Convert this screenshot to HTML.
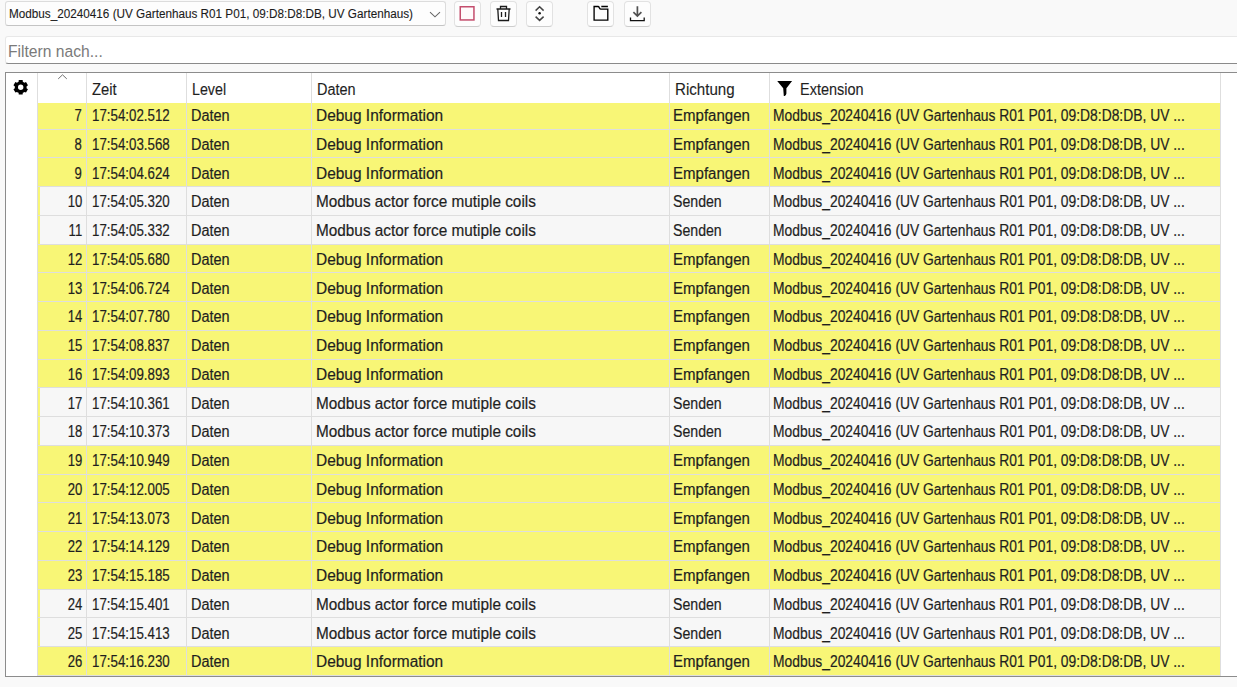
<!DOCTYPE html><html><head><meta charset="utf-8"><title>Log</title><style>
*{box-sizing:border-box;margin:0;padding:0}
html,body{width:1237px;height:687px;overflow:hidden;background:#f9f9f9;font-family:"Liberation Sans",sans-serif;}
.abs{position:absolute}
.t{position:absolute;white-space:nowrap;transform-origin:0 0;line-height:1}
.combo{left:5px;top:1px;width:441px;height:25px;background:#fdfdfd;border:1px solid #dcdcdc;border-bottom-color:#c4c4c4;border-radius:3px}
.btn{top:1px;width:27px;height:26px;background:#fdfdfd;border:1px solid #e2e2e2;border-bottom-color:#cdcdcd;border-radius:4px}
.filter{left:5px;top:36px;width:1240px;height:28px;background:#fff;border:1px solid #e8e8e8;border-bottom:1px solid #8a8a8a;border-radius:3px}
.grid{left:5px;top:72px;width:1240px;height:605px;background:#fff;border:1px solid #8c8c8c;overflow:hidden}
.row{position:absolute;left:32px;width:1183px;height:28.75px}
.y{background:#f8f676}
.g{background:#f7f7f7}
.sep{position:absolute;left:32px;width:1183px;height:1px;background:#dedede}
.vl{position:absolute;top:0;width:1px;height:605px;background:#dedede}
.cell{position:absolute;white-space:nowrap;font-size:15px;color:#1f1f1f;line-height:1;transform-origin:0 0;-webkit-text-stroke:0.2px #1f1f1f}
</style></head><body>
<div class="abs combo"></div>
<div class="t" style="left:9.02px;top:8.44px;font-size:12px;color:#1b1b1b;transform:scaleX(0.9769);-webkit-text-stroke:0.1px #1b1b1b">Modbus_20240416 (UV Gartenhaus R01 P01, 09:D8:D8:DB, UV Gartenhaus)</div>
<svg class="abs" style="left:428px;top:9px" width="14" height="10" viewBox="0 0 14 10"><path d="M2 3.2 L7 7.8 L12 3.2" fill="none" stroke="#666" stroke-width="1.05"/></svg>
<div class="abs btn" style="left:454px"></div>
<div class="abs btn" style="left:490px"></div>
<div class="abs btn" style="left:526px"></div>
<div class="abs btn" style="left:587px"></div>
<div class="abs btn" style="left:624px"></div>
<svg class="abs" style="left:454px;top:1px" width="27" height="26" viewBox="0 0 27 26"><rect x="6.25" y="5.75" width="13.7" height="13.2" fill="#fffafb" stroke="#c44d6d" stroke-width="1.5"/></svg>
<svg class="abs" style="left:490px;top:1px" width="27" height="26" viewBox="0 0 27 26"><path d="M6.5 8 H20.5 M10.5 7.5 V5.5 H16.5 V7.5 M7.8 8 L8.5 19.5 H18.5 L19.2 8 M11.5 11.1 V16 M15.5 11.1 V16" fill="none" stroke="#1a1a1a" stroke-width="1.3"/></svg>
<svg class="abs" style="left:526px;top:1px" width="27" height="26" viewBox="0 0 27 26"><path d="M9.6 9.6 L13.6 5.8 L17.6 9.6 M9.6 15.6 L13.6 19.4 L17.6 15.6" fill="none" stroke="#444" stroke-width="1.5"/><circle cx="13.6" cy="12.3" r="1.25" fill="#111"/></svg>
<svg class="abs" style="left:587px;top:1px" width="27" height="26" viewBox="0 0 27 26"><path d="M7.1 5.5 H11 Q11.8 5.5 12.3 6.6 L12.7 7.4 Q13 8.05 13.8 8.05 H20.8 V19.1 H7.1 Z M14.3 5.45 H20.9" fill="none" stroke="#000" stroke-width="1.35"/></svg>
<svg class="abs" style="left:624px;top:1px" width="27" height="26" viewBox="0 0 27 26"><path d="M13.4 5.2 V14.8 M9.4 11.2 L13.4 15 L17.4 11.2" fill="none" stroke="#505050" stroke-width="1.7"/><path d="M6.5 16.5 V19.7 H20.2 V16.5" fill="none" stroke="#111" stroke-width="1.3"/></svg>
<div class="abs filter"></div>
<div class="t" style="left:8.24px;top:43.10px;font-size:16.3px;color:#7a7a7a;transform:scaleX(0.9604);-webkit-text-stroke:0px #7a7a7a">Filtern nach...</div>
<div class="abs grid">
<div class="row y" style="top:30px;height:26.0px"></div>
<div class="row y" style="top:56.0px;height:28.75px"></div>
<div class="row y" style="top:84.75px;height:28.75px"></div>
<div class="row g" style="top:113.5px;height:28.75px"></div>
<div class="row y" style="top:113.5px;height:28.75px;width:2px"></div>
<div class="row g" style="top:142.25px;height:28.75px"></div>
<div class="row y" style="top:142.25px;height:28.75px;width:2px"></div>
<div class="row y" style="top:171.0px;height:28.75px"></div>
<div class="row y" style="top:199.75px;height:28.75px"></div>
<div class="row y" style="top:228.5px;height:28.75px"></div>
<div class="row y" style="top:257.25px;height:28.75px"></div>
<div class="row y" style="top:286.0px;height:28.75px"></div>
<div class="row g" style="top:314.75px;height:28.75px"></div>
<div class="row y" style="top:314.75px;height:28.75px;width:2px"></div>
<div class="row g" style="top:343.5px;height:28.75px"></div>
<div class="row y" style="top:343.5px;height:28.75px;width:2px"></div>
<div class="row y" style="top:372.25px;height:28.75px"></div>
<div class="row y" style="top:401.0px;height:28.75px"></div>
<div class="row y" style="top:429.75px;height:28.75px"></div>
<div class="row y" style="top:458.5px;height:28.75px"></div>
<div class="row y" style="top:487.25px;height:28.75px"></div>
<div class="row g" style="top:516.0px;height:28.75px"></div>
<div class="row y" style="top:516.0px;height:28.75px;width:2px"></div>
<div class="row g" style="top:544.75px;height:28.75px"></div>
<div class="row y" style="top:544.75px;height:28.75px;width:2px"></div>
<div class="row y" style="top:573.5px;height:28.75px"></div>
<div class="sep" style="top:55.5px"></div>
<div class="sep" style="top:84.25px"></div>
<div class="sep" style="top:113.0px"></div>
<div class="sep" style="top:141.75px"></div>
<div class="sep" style="top:170.5px"></div>
<div class="sep" style="top:199.25px"></div>
<div class="sep" style="top:228.0px"></div>
<div class="sep" style="top:256.75px"></div>
<div class="sep" style="top:285.5px"></div>
<div class="sep" style="top:314.25px"></div>
<div class="sep" style="top:343.0px"></div>
<div class="sep" style="top:371.75px"></div>
<div class="sep" style="top:400.5px"></div>
<div class="sep" style="top:429.25px"></div>
<div class="sep" style="top:458.0px"></div>
<div class="sep" style="top:486.75px"></div>
<div class="sep" style="top:515.5px"></div>
<div class="sep" style="top:544.25px"></div>
<div class="sep" style="top:573.0px"></div>
<div class="sep" style="top:601.75px"></div>
<div class="vl" style="left:31px"></div>
<div class="vl" style="left:80px"></div>
<div class="vl" style="left:180px"></div>
<div class="vl" style="left:305px"></div>
<div class="vl" style="left:663px"></div>
<div class="vl" style="left:763px"></div>
<div class="vl" style="left:1214px"></div>
<div class="cell" style="left:86.20px;top:9.29px;font-size:15.6px;color:#1f1f1f;transform:scaleX(0.9462);-webkit-text-stroke:0.12px #1f1f1f">Zeit</div>
<div class="cell" style="left:186.09px;top:9.29px;font-size:15.6px;color:#1f1f1f;transform:scaleX(0.9143);-webkit-text-stroke:0.12px #1f1f1f">Level</div>
<div class="cell" style="left:311.27px;top:9.29px;font-size:15.6px;color:#1f1f1f;transform:scaleX(0.9275);-webkit-text-stroke:0.12px #1f1f1f">Daten</div>
<div class="cell" style="left:668.73px;top:9.29px;font-size:15.6px;color:#1f1f1f;transform:scaleX(0.9700);-webkit-text-stroke:0.12px #1f1f1f">Richtung</div>
<div class="cell" style="left:794.07px;top:9.29px;font-size:15.6px;color:#1f1f1f;transform:scaleX(0.9284);-webkit-text-stroke:0.12px #1f1f1f">Extension</div>
<div class="cell" style="right:1162px;top:35.24px;font-size:15.6px;transform:scaleX(0.84);transform-origin:100% 0">7</div>
<div class="cell" style="left:85.85px;top:35.24px;font-size:15.6px;color:#1f1f1f;transform:scaleX(0.8533)">17:54:02.512</div>
<div class="cell" style="left:184.77px;top:35.24px;font-size:15.6px;color:#1f1f1f;transform:scaleX(0.9275)">Daten</div>
<div class="cell" style="left:309.61px;top:35.24px;font-size:15.6px;color:#1f1f1f;transform:scaleX(0.9913)">Debug Information</div>
<div class="cell" style="left:667.24px;top:35.24px;font-size:15.6px;color:#1f1f1f;transform:scaleX(0.9641)">Empfangen</div>
<div class="cell" style="left:767.41px;top:35.24px;font-size:15.6px;color:#1f1f1f;transform:scaleX(0.8879)">Modbus_20240416 (UV Gartenhaus R01 P01, 09:D8:D8:DB, UV ...</div>
<div class="cell" style="right:1162px;top:63.99px;font-size:15.6px;transform:scaleX(0.84);transform-origin:100% 0">8</div>
<div class="cell" style="left:85.85px;top:63.99px;font-size:15.6px;color:#1f1f1f;transform:scaleX(0.8533)">17:54:03.568</div>
<div class="cell" style="left:184.77px;top:63.99px;font-size:15.6px;color:#1f1f1f;transform:scaleX(0.9275)">Daten</div>
<div class="cell" style="left:309.61px;top:63.99px;font-size:15.6px;color:#1f1f1f;transform:scaleX(0.9913)">Debug Information</div>
<div class="cell" style="left:667.24px;top:63.99px;font-size:15.6px;color:#1f1f1f;transform:scaleX(0.9641)">Empfangen</div>
<div class="cell" style="left:767.41px;top:63.99px;font-size:15.6px;color:#1f1f1f;transform:scaleX(0.8879)">Modbus_20240416 (UV Gartenhaus R01 P01, 09:D8:D8:DB, UV ...</div>
<div class="cell" style="right:1162px;top:92.74px;font-size:15.6px;transform:scaleX(0.84);transform-origin:100% 0">9</div>
<div class="cell" style="left:85.85px;top:92.74px;font-size:15.6px;color:#1f1f1f;transform:scaleX(0.8533)">17:54:04.624</div>
<div class="cell" style="left:184.77px;top:92.74px;font-size:15.6px;color:#1f1f1f;transform:scaleX(0.9275)">Daten</div>
<div class="cell" style="left:309.61px;top:92.74px;font-size:15.6px;color:#1f1f1f;transform:scaleX(0.9913)">Debug Information</div>
<div class="cell" style="left:667.24px;top:92.74px;font-size:15.6px;color:#1f1f1f;transform:scaleX(0.9641)">Empfangen</div>
<div class="cell" style="left:767.41px;top:92.74px;font-size:15.6px;color:#1f1f1f;transform:scaleX(0.8879)">Modbus_20240416 (UV Gartenhaus R01 P01, 09:D8:D8:DB, UV ...</div>
<div class="cell" style="right:1162px;top:121.49px;font-size:15.6px;transform:scaleX(0.84);transform-origin:100% 0">10</div>
<div class="cell" style="left:85.85px;top:121.49px;font-size:15.6px;color:#1f1f1f;transform:scaleX(0.8533)">17:54:05.320</div>
<div class="cell" style="left:184.77px;top:121.49px;font-size:15.6px;color:#1f1f1f;transform:scaleX(0.9275)">Daten</div>
<div class="cell" style="left:309.62px;top:121.49px;font-size:15.6px;color:#1f1f1f;transform:scaleX(0.9833)">Modbus actor force mutiple coils</div>
<div class="cell" style="left:667.29px;top:121.49px;font-size:15.6px;color:#1f1f1f;transform:scaleX(0.9058)">Senden</div>
<div class="cell" style="left:767.41px;top:121.49px;font-size:15.6px;color:#1f1f1f;transform:scaleX(0.8879)">Modbus_20240416 (UV Gartenhaus R01 P01, 09:D8:D8:DB, UV ...</div>
<div class="cell" style="right:1162px;top:150.24px;font-size:15.6px;transform:scaleX(0.84);transform-origin:100% 0">11</div>
<div class="cell" style="left:85.85px;top:150.24px;font-size:15.6px;color:#1f1f1f;transform:scaleX(0.8533)">17:54:05.332</div>
<div class="cell" style="left:184.77px;top:150.24px;font-size:15.6px;color:#1f1f1f;transform:scaleX(0.9275)">Daten</div>
<div class="cell" style="left:309.62px;top:150.24px;font-size:15.6px;color:#1f1f1f;transform:scaleX(0.9833)">Modbus actor force mutiple coils</div>
<div class="cell" style="left:667.29px;top:150.24px;font-size:15.6px;color:#1f1f1f;transform:scaleX(0.9058)">Senden</div>
<div class="cell" style="left:767.41px;top:150.24px;font-size:15.6px;color:#1f1f1f;transform:scaleX(0.8879)">Modbus_20240416 (UV Gartenhaus R01 P01, 09:D8:D8:DB, UV ...</div>
<div class="cell" style="right:1162px;top:178.99px;font-size:15.6px;transform:scaleX(0.84);transform-origin:100% 0">12</div>
<div class="cell" style="left:85.85px;top:178.99px;font-size:15.6px;color:#1f1f1f;transform:scaleX(0.8533)">17:54:05.680</div>
<div class="cell" style="left:184.77px;top:178.99px;font-size:15.6px;color:#1f1f1f;transform:scaleX(0.9275)">Daten</div>
<div class="cell" style="left:309.61px;top:178.99px;font-size:15.6px;color:#1f1f1f;transform:scaleX(0.9913)">Debug Information</div>
<div class="cell" style="left:667.24px;top:178.99px;font-size:15.6px;color:#1f1f1f;transform:scaleX(0.9641)">Empfangen</div>
<div class="cell" style="left:767.41px;top:178.99px;font-size:15.6px;color:#1f1f1f;transform:scaleX(0.8879)">Modbus_20240416 (UV Gartenhaus R01 P01, 09:D8:D8:DB, UV ...</div>
<div class="cell" style="right:1162px;top:207.74px;font-size:15.6px;transform:scaleX(0.84);transform-origin:100% 0">13</div>
<div class="cell" style="left:85.85px;top:207.74px;font-size:15.6px;color:#1f1f1f;transform:scaleX(0.8533)">17:54:06.724</div>
<div class="cell" style="left:184.77px;top:207.74px;font-size:15.6px;color:#1f1f1f;transform:scaleX(0.9275)">Daten</div>
<div class="cell" style="left:309.61px;top:207.74px;font-size:15.6px;color:#1f1f1f;transform:scaleX(0.9913)">Debug Information</div>
<div class="cell" style="left:667.24px;top:207.74px;font-size:15.6px;color:#1f1f1f;transform:scaleX(0.9641)">Empfangen</div>
<div class="cell" style="left:767.41px;top:207.74px;font-size:15.6px;color:#1f1f1f;transform:scaleX(0.8879)">Modbus_20240416 (UV Gartenhaus R01 P01, 09:D8:D8:DB, UV ...</div>
<div class="cell" style="right:1162px;top:236.49px;font-size:15.6px;transform:scaleX(0.84);transform-origin:100% 0">14</div>
<div class="cell" style="left:85.85px;top:236.49px;font-size:15.6px;color:#1f1f1f;transform:scaleX(0.8533)">17:54:07.780</div>
<div class="cell" style="left:184.77px;top:236.49px;font-size:15.6px;color:#1f1f1f;transform:scaleX(0.9275)">Daten</div>
<div class="cell" style="left:309.61px;top:236.49px;font-size:15.6px;color:#1f1f1f;transform:scaleX(0.9913)">Debug Information</div>
<div class="cell" style="left:667.24px;top:236.49px;font-size:15.6px;color:#1f1f1f;transform:scaleX(0.9641)">Empfangen</div>
<div class="cell" style="left:767.41px;top:236.49px;font-size:15.6px;color:#1f1f1f;transform:scaleX(0.8879)">Modbus_20240416 (UV Gartenhaus R01 P01, 09:D8:D8:DB, UV ...</div>
<div class="cell" style="right:1162px;top:265.24px;font-size:15.6px;transform:scaleX(0.84);transform-origin:100% 0">15</div>
<div class="cell" style="left:85.85px;top:265.24px;font-size:15.6px;color:#1f1f1f;transform:scaleX(0.8533)">17:54:08.837</div>
<div class="cell" style="left:184.77px;top:265.24px;font-size:15.6px;color:#1f1f1f;transform:scaleX(0.9275)">Daten</div>
<div class="cell" style="left:309.61px;top:265.24px;font-size:15.6px;color:#1f1f1f;transform:scaleX(0.9913)">Debug Information</div>
<div class="cell" style="left:667.24px;top:265.24px;font-size:15.6px;color:#1f1f1f;transform:scaleX(0.9641)">Empfangen</div>
<div class="cell" style="left:767.41px;top:265.24px;font-size:15.6px;color:#1f1f1f;transform:scaleX(0.8879)">Modbus_20240416 (UV Gartenhaus R01 P01, 09:D8:D8:DB, UV ...</div>
<div class="cell" style="right:1162px;top:293.99px;font-size:15.6px;transform:scaleX(0.84);transform-origin:100% 0">16</div>
<div class="cell" style="left:85.85px;top:293.99px;font-size:15.6px;color:#1f1f1f;transform:scaleX(0.8533)">17:54:09.893</div>
<div class="cell" style="left:184.77px;top:293.99px;font-size:15.6px;color:#1f1f1f;transform:scaleX(0.9275)">Daten</div>
<div class="cell" style="left:309.61px;top:293.99px;font-size:15.6px;color:#1f1f1f;transform:scaleX(0.9913)">Debug Information</div>
<div class="cell" style="left:667.24px;top:293.99px;font-size:15.6px;color:#1f1f1f;transform:scaleX(0.9641)">Empfangen</div>
<div class="cell" style="left:767.41px;top:293.99px;font-size:15.6px;color:#1f1f1f;transform:scaleX(0.8879)">Modbus_20240416 (UV Gartenhaus R01 P01, 09:D8:D8:DB, UV ...</div>
<div class="cell" style="right:1162px;top:322.74px;font-size:15.6px;transform:scaleX(0.84);transform-origin:100% 0">17</div>
<div class="cell" style="left:85.85px;top:322.74px;font-size:15.6px;color:#1f1f1f;transform:scaleX(0.8533)">17:54:10.361</div>
<div class="cell" style="left:184.77px;top:322.74px;font-size:15.6px;color:#1f1f1f;transform:scaleX(0.9275)">Daten</div>
<div class="cell" style="left:309.62px;top:322.74px;font-size:15.6px;color:#1f1f1f;transform:scaleX(0.9833)">Modbus actor force mutiple coils</div>
<div class="cell" style="left:667.29px;top:322.74px;font-size:15.6px;color:#1f1f1f;transform:scaleX(0.9058)">Senden</div>
<div class="cell" style="left:767.41px;top:322.74px;font-size:15.6px;color:#1f1f1f;transform:scaleX(0.8879)">Modbus_20240416 (UV Gartenhaus R01 P01, 09:D8:D8:DB, UV ...</div>
<div class="cell" style="right:1162px;top:351.49px;font-size:15.6px;transform:scaleX(0.84);transform-origin:100% 0">18</div>
<div class="cell" style="left:85.85px;top:351.49px;font-size:15.6px;color:#1f1f1f;transform:scaleX(0.8533)">17:54:10.373</div>
<div class="cell" style="left:184.77px;top:351.49px;font-size:15.6px;color:#1f1f1f;transform:scaleX(0.9275)">Daten</div>
<div class="cell" style="left:309.62px;top:351.49px;font-size:15.6px;color:#1f1f1f;transform:scaleX(0.9833)">Modbus actor force mutiple coils</div>
<div class="cell" style="left:667.29px;top:351.49px;font-size:15.6px;color:#1f1f1f;transform:scaleX(0.9058)">Senden</div>
<div class="cell" style="left:767.41px;top:351.49px;font-size:15.6px;color:#1f1f1f;transform:scaleX(0.8879)">Modbus_20240416 (UV Gartenhaus R01 P01, 09:D8:D8:DB, UV ...</div>
<div class="cell" style="right:1162px;top:380.24px;font-size:15.6px;transform:scaleX(0.84);transform-origin:100% 0">19</div>
<div class="cell" style="left:85.85px;top:380.24px;font-size:15.6px;color:#1f1f1f;transform:scaleX(0.8533)">17:54:10.949</div>
<div class="cell" style="left:184.77px;top:380.24px;font-size:15.6px;color:#1f1f1f;transform:scaleX(0.9275)">Daten</div>
<div class="cell" style="left:309.61px;top:380.24px;font-size:15.6px;color:#1f1f1f;transform:scaleX(0.9913)">Debug Information</div>
<div class="cell" style="left:667.24px;top:380.24px;font-size:15.6px;color:#1f1f1f;transform:scaleX(0.9641)">Empfangen</div>
<div class="cell" style="left:767.41px;top:380.24px;font-size:15.6px;color:#1f1f1f;transform:scaleX(0.8879)">Modbus_20240416 (UV Gartenhaus R01 P01, 09:D8:D8:DB, UV ...</div>
<div class="cell" style="right:1162px;top:408.99px;font-size:15.6px;transform:scaleX(0.84);transform-origin:100% 0">20</div>
<div class="cell" style="left:85.85px;top:408.99px;font-size:15.6px;color:#1f1f1f;transform:scaleX(0.8533)">17:54:12.005</div>
<div class="cell" style="left:184.77px;top:408.99px;font-size:15.6px;color:#1f1f1f;transform:scaleX(0.9275)">Daten</div>
<div class="cell" style="left:309.61px;top:408.99px;font-size:15.6px;color:#1f1f1f;transform:scaleX(0.9913)">Debug Information</div>
<div class="cell" style="left:667.24px;top:408.99px;font-size:15.6px;color:#1f1f1f;transform:scaleX(0.9641)">Empfangen</div>
<div class="cell" style="left:767.41px;top:408.99px;font-size:15.6px;color:#1f1f1f;transform:scaleX(0.8879)">Modbus_20240416 (UV Gartenhaus R01 P01, 09:D8:D8:DB, UV ...</div>
<div class="cell" style="right:1162px;top:437.74px;font-size:15.6px;transform:scaleX(0.84);transform-origin:100% 0">21</div>
<div class="cell" style="left:85.85px;top:437.74px;font-size:15.6px;color:#1f1f1f;transform:scaleX(0.8533)">17:54:13.073</div>
<div class="cell" style="left:184.77px;top:437.74px;font-size:15.6px;color:#1f1f1f;transform:scaleX(0.9275)">Daten</div>
<div class="cell" style="left:309.61px;top:437.74px;font-size:15.6px;color:#1f1f1f;transform:scaleX(0.9913)">Debug Information</div>
<div class="cell" style="left:667.24px;top:437.74px;font-size:15.6px;color:#1f1f1f;transform:scaleX(0.9641)">Empfangen</div>
<div class="cell" style="left:767.41px;top:437.74px;font-size:15.6px;color:#1f1f1f;transform:scaleX(0.8879)">Modbus_20240416 (UV Gartenhaus R01 P01, 09:D8:D8:DB, UV ...</div>
<div class="cell" style="right:1162px;top:466.49px;font-size:15.6px;transform:scaleX(0.84);transform-origin:100% 0">22</div>
<div class="cell" style="left:85.85px;top:466.49px;font-size:15.6px;color:#1f1f1f;transform:scaleX(0.8533)">17:54:14.129</div>
<div class="cell" style="left:184.77px;top:466.49px;font-size:15.6px;color:#1f1f1f;transform:scaleX(0.9275)">Daten</div>
<div class="cell" style="left:309.61px;top:466.49px;font-size:15.6px;color:#1f1f1f;transform:scaleX(0.9913)">Debug Information</div>
<div class="cell" style="left:667.24px;top:466.49px;font-size:15.6px;color:#1f1f1f;transform:scaleX(0.9641)">Empfangen</div>
<div class="cell" style="left:767.41px;top:466.49px;font-size:15.6px;color:#1f1f1f;transform:scaleX(0.8879)">Modbus_20240416 (UV Gartenhaus R01 P01, 09:D8:D8:DB, UV ...</div>
<div class="cell" style="right:1162px;top:495.24px;font-size:15.6px;transform:scaleX(0.84);transform-origin:100% 0">23</div>
<div class="cell" style="left:85.85px;top:495.24px;font-size:15.6px;color:#1f1f1f;transform:scaleX(0.8533)">17:54:15.185</div>
<div class="cell" style="left:184.77px;top:495.24px;font-size:15.6px;color:#1f1f1f;transform:scaleX(0.9275)">Daten</div>
<div class="cell" style="left:309.61px;top:495.24px;font-size:15.6px;color:#1f1f1f;transform:scaleX(0.9913)">Debug Information</div>
<div class="cell" style="left:667.24px;top:495.24px;font-size:15.6px;color:#1f1f1f;transform:scaleX(0.9641)">Empfangen</div>
<div class="cell" style="left:767.41px;top:495.24px;font-size:15.6px;color:#1f1f1f;transform:scaleX(0.8879)">Modbus_20240416 (UV Gartenhaus R01 P01, 09:D8:D8:DB, UV ...</div>
<div class="cell" style="right:1162px;top:523.99px;font-size:15.6px;transform:scaleX(0.84);transform-origin:100% 0">24</div>
<div class="cell" style="left:85.85px;top:523.99px;font-size:15.6px;color:#1f1f1f;transform:scaleX(0.8533)">17:54:15.401</div>
<div class="cell" style="left:184.77px;top:523.99px;font-size:15.6px;color:#1f1f1f;transform:scaleX(0.9275)">Daten</div>
<div class="cell" style="left:309.62px;top:523.99px;font-size:15.6px;color:#1f1f1f;transform:scaleX(0.9833)">Modbus actor force mutiple coils</div>
<div class="cell" style="left:667.29px;top:523.99px;font-size:15.6px;color:#1f1f1f;transform:scaleX(0.9058)">Senden</div>
<div class="cell" style="left:767.41px;top:523.99px;font-size:15.6px;color:#1f1f1f;transform:scaleX(0.8879)">Modbus_20240416 (UV Gartenhaus R01 P01, 09:D8:D8:DB, UV ...</div>
<div class="cell" style="right:1162px;top:552.74px;font-size:15.6px;transform:scaleX(0.84);transform-origin:100% 0">25</div>
<div class="cell" style="left:85.85px;top:552.74px;font-size:15.6px;color:#1f1f1f;transform:scaleX(0.8533)">17:54:15.413</div>
<div class="cell" style="left:184.77px;top:552.74px;font-size:15.6px;color:#1f1f1f;transform:scaleX(0.9275)">Daten</div>
<div class="cell" style="left:309.62px;top:552.74px;font-size:15.6px;color:#1f1f1f;transform:scaleX(0.9833)">Modbus actor force mutiple coils</div>
<div class="cell" style="left:667.29px;top:552.74px;font-size:15.6px;color:#1f1f1f;transform:scaleX(0.9058)">Senden</div>
<div class="cell" style="left:767.41px;top:552.74px;font-size:15.6px;color:#1f1f1f;transform:scaleX(0.8879)">Modbus_20240416 (UV Gartenhaus R01 P01, 09:D8:D8:DB, UV ...</div>
<div class="cell" style="right:1162px;top:581.49px;font-size:15.6px;transform:scaleX(0.84);transform-origin:100% 0">26</div>
<div class="cell" style="left:85.85px;top:581.49px;font-size:15.6px;color:#1f1f1f;transform:scaleX(0.8533)">17:54:16.230</div>
<div class="cell" style="left:184.77px;top:581.49px;font-size:15.6px;color:#1f1f1f;transform:scaleX(0.9275)">Daten</div>
<div class="cell" style="left:309.61px;top:581.49px;font-size:15.6px;color:#1f1f1f;transform:scaleX(0.9913)">Debug Information</div>
<div class="cell" style="left:667.24px;top:581.49px;font-size:15.6px;color:#1f1f1f;transform:scaleX(0.9641)">Empfangen</div>
<div class="cell" style="left:767.41px;top:581.49px;font-size:15.6px;color:#1f1f1f;transform:scaleX(0.8879)">Modbus_20240416 (UV Gartenhaus R01 P01, 09:D8:D8:DB, UV ...</div>
<svg class="abs" style="left:0;top:0" width="32" height="30" viewBox="0 0 32 30"><path d="M16.81 8.79 L16.64 7.06 L12.76 7.06 L12.59 8.79 A5.9 5.9 0 0 0 10.99 9.71 L9.40 9.00 L7.46 12.36 L8.87 13.38 A5.9 5.9 0 0 0 8.87 15.22 L7.46 16.24 L9.40 19.60 L10.99 18.89 A5.9 5.9 0 0 0 12.59 19.81 L12.76 21.54 L16.64 21.54 L16.81 19.81 A5.9 5.9 0 0 0 18.41 18.89 L20.00 19.60 L21.94 16.24 L20.53 15.22 A5.9 5.9 0 0 0 20.53 13.38 L21.94 12.36 L20.00 9.00 L18.41 9.71 A5.9 5.9 0 0 0 16.81 8.79 Z M17.40 14.30 A2.7 2.7 0 1 0 12.00 14.30 A2.7 2.7 0 1 0 17.40 14.30 Z" fill="#000" fill-rule="evenodd"/></svg>
<svg class="abs" style="left:0;top:0" width="80" height="12" viewBox="0 0 80 12"><path d="M52.2 5.900000000000006 L56.5 1.7999999999999972 L60.8 5.900000000000006" fill="none" stroke="#707070" stroke-width="1.0"/></svg>
<svg class="abs" style="left:770px;top:8px" width="18" height="16" viewBox="0 0 18 16"><path d="M1.2 0.1 H16.1 L10.4 7.2 V12.6 Q10.3 14.4 8.7 15 H7.8 L7.2 7.2 Z" fill="#000"/></svg>
</div>
</body></html>
